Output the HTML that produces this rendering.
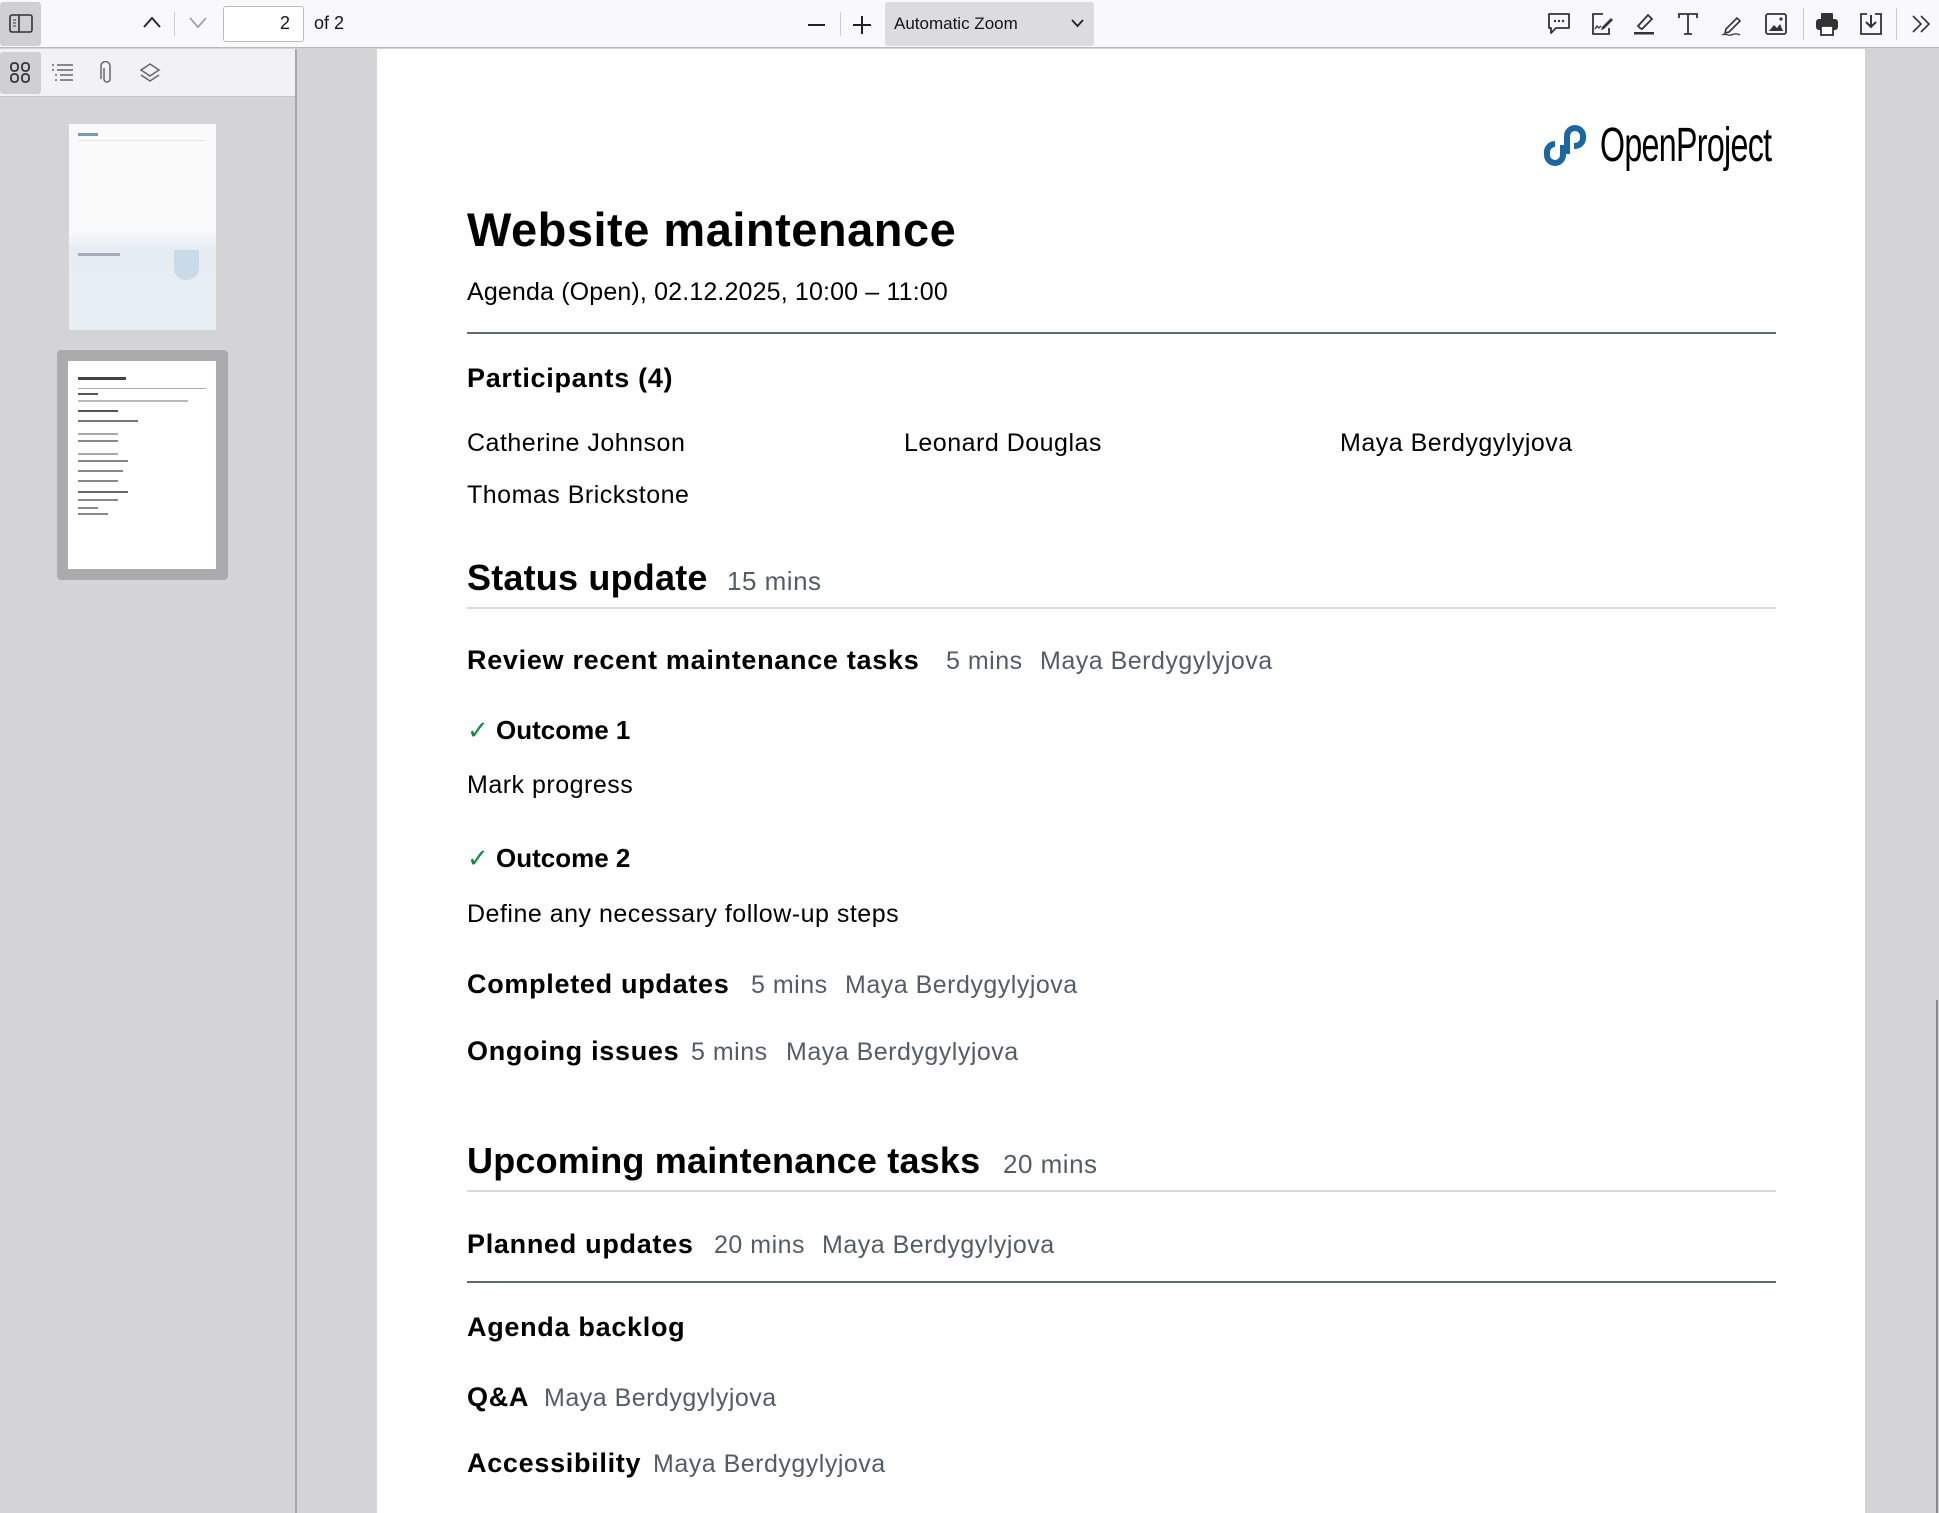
<!DOCTYPE html>
<html><head><meta charset="utf-8"><style>
*{margin:0;padding:0;box-sizing:border-box}
body{width:1939px;height:1513px;overflow:hidden;background:#d4d4d7;font-family:"Liberation Sans",Arial,sans-serif;position:relative;color:#15141a}
.a{position:absolute;white-space:nowrap}
#tb{position:absolute;left:0;top:0;width:1939px;height:48px;background:#f9f9fb;border-bottom:1px solid #b8b8bc}
#sb{position:absolute;left:0;top:49px;width:297px;height:1464px;background:#d4d4d7;border-right:2px solid #a8a8ac}
#sbt{position:absolute;left:0;top:49px;width:295px;height:48px;background:#f2f2f4;border-bottom:1px solid #c8c8cc}
#page{position:absolute;left:377px;top:49px;width:1488px;height:1464px;background:#fff}
.doc{font-family:"Liberation Sans",Arial,sans-serif;color:#000}
.doc .a{letter-spacing:0.5px}
.doc .b{font-weight:bold;letter-spacing:0.7px}
.doc .h{letter-spacing:0.2px}
.g{color:#545c66}
.hr{position:absolute;left:467px;width:1309px}
svg{position:absolute}
</style></head><body>
<div id="tb"></div>
<div style="position:absolute;left:0;top:2px;width:41px;height:44px;background:#d0d0d4;border-radius:3px"></div>
<svg style="left:9px;top:14px" width="24" height="20" viewBox="0 0 24 20"><rect x="1" y="1" width="22" height="17" rx="2" fill="none" stroke="#333" stroke-width="1.6"/><line x1="10" y1="1" x2="10" y2="18" stroke="#333" stroke-width="1.6"/><line x1="4" y1="6" x2="7" y2="6" stroke="#333"/><line x1="4" y1="9" x2="7" y2="9" stroke="#333"/><line x1="4" y1="12" x2="7" y2="12" stroke="#333"/></svg>
<svg style="left:143px;top:16px" width="18" height="12"><polyline points="1,11 9,2 17,11" fill="none" stroke="#222" stroke-width="1.8"/></svg>
<div class="a" style="left:174px;top:12px;width:1px;height:24px;background:#ccc"></div>
<svg style="left:189px;top:17px" width="18" height="12"><polyline points="1,1 9,10 17,1" fill="none" stroke="#999" stroke-width="1.6"/></svg>
<div class="a" style="left:223px;top:6px;width:81px;height:36px;background:#fff;border:1px solid #bbb;border-radius:3px"></div>
<div class="a" style="left:280px;top:13px;font-size:18px">2</div>
<div class="a" style="left:314px;top:13px;font-size:18px">of 2</div>
<div class="a" style="left:808px;top:24px;width:17px;height:2px;background:#222"></div>
<div class="a" style="left:840px;top:12px;width:1px;height:24px;background:#ccc"></div>
<div class="a" style="left:853px;top:24px;width:18px;height:2px;background:#222"></div>
<div class="a" style="left:861px;top:16px;width:2px;height:18px;background:#222"></div>
<div class="a" style="left:885px;top:2px;width:209px;height:44px;background:#dcdce0;border-radius:3px"></div>
<div class="a" style="left:894px;top:14px;font-size:17px">Automatic Zoom</div>
<svg style="left:1071px;top:19px" width="13" height="9"><polyline points="1,1 6.5,7 12,1" fill="none" stroke="#222" stroke-width="1.8"/></svg>
<svg style="left:1546px;top:11px" width="26" height="26" viewBox="0 0 26 26"><path d="M3 3h20v14H10l-5 5v-5H3z" fill="none" stroke="#333" stroke-width="1.8" stroke-linejoin="round"/><circle cx="9" cy="10" r="1.2" fill="#333"/><circle cx="13" cy="10" r="1.2" fill="#333"/><circle cx="17" cy="10" r="1.2" fill="#333"/></svg>
<svg style="left:1588px;top:11px" width="26" height="26" viewBox="0 0 26 26"><path d="M15 3H5v20h16v-6" fill="none" stroke="#333" stroke-width="1.8"/><path d="M14 16l9-9 2 2-9 9-3 1z" fill="#333"/><path d="M7 18l2-3 2 2 2-2" fill="none" stroke="#333" stroke-width="1.3"/></svg>
<svg style="left:1631px;top:11px" width="26" height="26" viewBox="0 0 26 26"><path d="M9 17l-2-2L17 4l4 4-10 10z" fill="none" stroke="#333" stroke-width="1.8"/><rect x="3" y="21" width="20" height="2.5" fill="#333"/></svg>
<svg style="left:1675px;top:11px" width="26" height="26" viewBox="0 0 26 26"><path d="M4 7V3h18v4M13 3v20M9 23h8" fill="none" stroke="#333" stroke-width="1.8"/></svg>
<svg style="left:1719px;top:11px" width="26" height="26" viewBox="0 0 26 26"><path d="M7 18l-1 4 4-1L21 10l-3-3z" fill="none" stroke="#333" stroke-width="1.6"/><path d="M3 24c4-2 6 1 9 0s5-2 9 0" fill="none" stroke="#333" stroke-width="1.2"/></svg>
<svg style="left:1763px;top:11px" width="26" height="26" viewBox="0 0 26 26"><rect x="3" y="3" width="20" height="20" rx="2" fill="none" stroke="#333" stroke-width="1.8"/><path d="M6 20l5-6 3 3 3-4 3 7z" fill="#333"/><circle cx="18" cy="8" r="1.6" fill="#333"/></svg>
<div class="a" style="left:1803px;top:8px;width:1px;height:32px;background:#ccc"></div>
<svg style="left:1814px;top:11px" width="26" height="26" viewBox="0 0 26 26"><rect x="7" y="2" width="12" height="7" rx="1" fill="#333"/><rect x="2" y="8" width="22" height="11" rx="3" fill="#333"/><rect x="7" y="15" width="12" height="9" fill="#fff" stroke="#333" stroke-width="1.8"/></svg>
<svg style="left:1858px;top:11px" width="26" height="26" viewBox="0 0 26 26"><path d="M9 3H3v20h20V3h-6" fill="none" stroke="#333" stroke-width="1.8"/><path d="M13 4v12M8 11l5 5 5-5" fill="none" stroke="#333" stroke-width="2"/></svg>
<div class="a" style="left:1896px;top:8px;width:1px;height:32px;background:#ccc"></div>
<svg style="left:1911px;top:14px" width="20" height="20"><path d="M2 2l8 8-8 8M10 2l8 8-8 8" fill="none" stroke="#333" stroke-width="1.6"/></svg>

<div id="sb"></div>
<div id="sbt"></div>
<div class="a" style="left:0;top:52px;width:41px;height:42px;background:#d0d0d4;border-radius:3px"></div>
<svg style="left:10px;top:62px" width="22" height="22"><rect x="1" y="1" width="7" height="8" rx="3" fill="none" stroke="#333" stroke-width="1.8"/><rect x="12" y="1" width="7" height="8" rx="3" fill="none" stroke="#333" stroke-width="1.8"/><rect x="1" y="12" width="7" height="8" rx="3" fill="none" stroke="#333" stroke-width="1.8"/><rect x="12" y="12" width="7" height="8" rx="3" fill="none" stroke="#333" stroke-width="1.8"/></svg>
<svg style="left:51px;top:63px" width="24" height="20"><g stroke="#666" stroke-width="1.5"><path d="M1 2h2M6 2h16M1 7h2M6 7h16M4 12h2M9 12h13M4 17h2M9 17h13"/></g></svg>
<svg style="left:99px;top:61px" width="16" height="24"><path d="M5 7v11a3 3 0 0 0 6 0V5a4.5 4.5 0 0 0-9 0v13" fill="none" stroke="#666" stroke-width="1.5"/></svg>
<svg style="left:139px;top:63px" width="22" height="20"><path d="M11 1l9 6-9 6-9-6z" fill="none" stroke="#666" stroke-width="1.5"/><path d="M2 12l9 6 9-6" fill="none" stroke="#666" stroke-width="1.5"/></svg>
<div class="a" style="left:69px;top:124px;width:147px;height:206px;background:linear-gradient(#fafafa 0%,#fafafa 52%,#e6eef4 60%,#e8eff4 100%)"></div>
<div class="a" style="left:78px;top:133px;width:20px;height:3px;background:#7a9ab8"></div>
<div class="a" style="left:78px;top:140px;width:127px;height:1px;background:#e5e5e5"></div>
<div class="a" style="left:78px;top:253px;width:42px;height:3px;background:#aab"></div>
<div class="a" style="left:174px;top:250px;width:25px;height:30px;background:#c9dbe8;border-radius:0 0 12px 12px"></div>
<div class="a" style="left:57px;top:350px;width:171px;height:230px;background:#ababae;border-radius:4px"></div>
<div class="a" style="left:68px;top:361px;width:148px;height:208px;background:#fff"></div>
<div class="a" style="left:78px;top:377px;width:48px;height:3px;background:#444"></div>
<div class="a" style="left:78px;top:388px;width:128px;height:1px;background:#aaa"></div>
<div class="a" style="left:78px;top:393px;width:20px;height:2px;background:#555"></div>
<div class="a" style="left:78px;top:400px;width:110px;height:2px;background:#bbb"></div>
<div class="a" style="left:78px;top:410px;width:40px;height:2px;background:#555"></div>
<div class="a" style="left:78px;top:420px;width:60px;height:2px;background:#777"></div>
<div class="a" style="left:78px;top:433px;width:40px;height:2px;background:#aaa"></div>
<div class="a" style="left:78px;top:440px;width:40px;height:2px;background:#888"></div>
<div class="a" style="left:78px;top:453px;width:40px;height:2px;background:#aaa"></div>
<div class="a" style="left:78px;top:460px;width:50px;height:2px;background:#888"></div>
<div class="a" style="left:78px;top:470px;width:45px;height:2px;background:#888"></div>
<div class="a" style="left:78px;top:480px;width:40px;height:2px;background:#888"></div>
<div class="a" style="left:78px;top:491px;width:50px;height:2px;background:#666"></div>
<div class="a" style="left:78px;top:499px;width:40px;height:2px;background:#888"></div>
<div class="a" style="left:78px;top:507px;width:20px;height:2px;background:#888"></div>
<div class="a" style="left:78px;top:513px;width:30px;height:2px;background:#888"></div>

<div id="page"></div>
<svg style="left:1543px;top:124px" width="46" height="46" viewBox="0 0 46 46"><path d="M24 30V12a8 8 0 0 1 16 0v2a8 8 0 0 1-8 8h-1" fill="none" stroke="#1a67a3" stroke-width="6"/><path d="M20 21v10a8 8 0 0 1-16 0v-3a8 8 0 0 1 8-8" fill="none" stroke="#1a67a3" stroke-width="6"/></svg>
<div class="a" style="left:1600px;top:118px;font-size:48px;transform:scaleX(0.67);transform-origin:left top;letter-spacing:-1px;color:#000">OpenProject</div>
<div class="doc">
<div class="a b" style="left:467px;top:203px;font-size:47px;line-height:54px;letter-spacing:0.5px">Website maintenance</div>
<div class="a" style="left:467px;top:277px;font-size:25px;line-height:30px;letter-spacing:0.15px">Agenda (Open), 02.12.2025, 10:00 – 11:00</div>
<div class="hr" style="top:332px;height:2px;background:#5f6770"></div>
<div class="a b" style="left:467px;top:363px;font-size:27px;line-height:30px">Participants (4)</div>
<div class="a" style="left:467px;top:428px;font-size:25px;line-height:30px">Catherine Johnson</div>
<div class="a" style="left:904px;top:428px;font-size:25px;line-height:30px">Leonard Douglas</div>
<div class="a" style="left:1340px;top:428px;font-size:25px;line-height:30px">Maya Berdygylyjova</div>
<div class="a" style="left:467px;top:480px;font-size:25px;line-height:30px">Thomas Brickstone</div>
<div class="a b h" style="left:467px;top:558px;font-size:36px;line-height:40px">Status update</div>
<div class="a g" style="left:727px;top:566px;font-size:26px;line-height:30px">15 mins</div>
<div class="hr" style="top:607px;height:2px;background:#d6dbe0"></div>
<div class="a b" style="left:467px;top:645px;font-size:27px;line-height:30px">Review recent maintenance tasks</div>
<div class="a g" style="left:946px;top:646px;font-size:25px;line-height:30px">5 mins</div>
<div class="a g" style="left:1040px;top:646px;font-size:25px;line-height:30px">Maya Berdygylyjova</div>
<div class="a b" style="left:467px;top:715px;font-size:26px;line-height:30px;letter-spacing:0"><span style="color:#1f883d;font-weight:normal">✓</span> Outcome 1</div>
<div class="a" style="left:467px;top:770px;font-size:25px;line-height:30px">Mark progress</div>
<div class="a b" style="left:467px;top:843px;font-size:26px;line-height:30px;letter-spacing:0"><span style="color:#1f883d;font-weight:normal">✓</span> Outcome 2</div>
<div class="a" style="left:467px;top:899px;font-size:25px;line-height:30px">Define any necessary follow-up steps</div>
<div class="a b" style="left:467px;top:969px;font-size:27px;line-height:30px">Completed updates</div>
<div class="a g" style="left:751px;top:970px;font-size:25px;line-height:30px">5 mins</div>
<div class="a g" style="left:845px;top:970px;font-size:25px;line-height:30px">Maya Berdygylyjova</div>
<div class="a b" style="left:467px;top:1036px;font-size:27px;line-height:30px">Ongoing issues</div>
<div class="a g" style="left:691px;top:1037px;font-size:25px;line-height:30px">5 mins</div>
<div class="a g" style="left:786px;top:1037px;font-size:25px;line-height:30px">Maya Berdygylyjova</div>
<div class="a b h" style="left:467px;top:1141px;font-size:36px;line-height:40px">Upcoming maintenance tasks</div>
<div class="a g" style="left:1003px;top:1149px;font-size:26px;line-height:30px">20 mins</div>
<div class="hr" style="top:1190px;height:2px;background:#d6dbe0"></div>
<div class="a b" style="left:467px;top:1229px;font-size:27px;line-height:30px">Planned updates</div>
<div class="a g" style="left:714px;top:1230px;font-size:25px;line-height:30px">20 mins</div>
<div class="a g" style="left:822px;top:1230px;font-size:25px;line-height:30px">Maya Berdygylyjova</div>
<div class="hr" style="top:1281px;height:2px;background:#5f6770"></div>
<div class="a b" style="left:467px;top:1312px;font-size:27px;line-height:30px">Agenda backlog</div>
<div class="a b" style="left:467px;top:1382px;font-size:27px;line-height:30px">Q&amp;A</div>
<div class="a g" style="left:544px;top:1383px;font-size:25px;line-height:30px">Maya Berdygylyjova</div>
<div class="a b" style="left:467px;top:1448px;font-size:27px;line-height:30px">Accessibility</div>
<div class="a g" style="left:653px;top:1449px;font-size:25px;line-height:30px">Maya Berdygylyjova</div>
</div>
<div class="a" style="left:1936px;top:1000px;width:2px;height:513px;background:#888"></div>
</body></html>
